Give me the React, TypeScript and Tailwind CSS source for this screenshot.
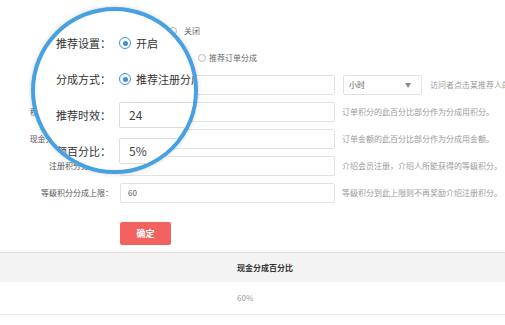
import React from "react";

const font = "font-['Noto_Sans_CJK_SC','Noto_Sans',sans-serif]";

function URow({ label, children }: { label: string; children?: React.ReactNode }) {
  return (
    <div className="flex h-[27px] items-center">
      <div className="w-[113px] shrink-0 whitespace-nowrap text-right text-[8px] leading-none text-[#555]">{label}</div>
      <div className="ml-[7px] flex items-center whitespace-nowrap">{children}</div>
    </div>
  );
}

function UInput({ value }: { value?: string }) {
  return (
    <div className="flex h-[20px] w-[215px] shrink-0 items-center rounded-[2px] border border-[#e2e2e2] bg-white pl-[7px] text-[8px] text-[#555]">
      {value}
    </div>
  );
}

function UHint({ text, ml = "ml-[7px]" }: { text: string; ml?: string }) {
  return <span className={`${ml} whitespace-nowrap text-[8px] leading-none text-[#9a9a9a]`}>{text}</span>;
}

function URadio({ on }: { on?: boolean }) {
  return (
    <span className={`flex h-[8px] w-[8px] items-center justify-center rounded-full border ${on ? "border-[#3d8fdc]" : "border-[#bbb]"}`}>
      {on && <span className="h-[3px] w-[3px] rounded-full bg-[#3d8fdc]" />}
    </span>
  );
}

function MRadio({ on }: { on?: boolean }) {
  return (
    <span className={`flex h-[12px] w-[12px] shrink-0 items-center justify-center rounded-full border-[1.5px] ${on ? "border-[#3d8fdc]" : "border-[#c4c4c4]"}`}>
      {on && <span className="h-[5px] w-[5px] rounded-full bg-[#3d8fdc]" />}
    </span>
  );
}

function MRow({ label, children }: { label: string; children?: React.ReactNode }) {
  return (
    <div className="flex h-[36px] items-center">
      <div className="w-[111px] shrink-0 whitespace-nowrap text-right text-[11px] leading-none text-[#333]">{label}</div>
      <div className="ml-[8px] flex items-center whitespace-nowrap">{children}</div>
    </div>
  );
}

function MInput({ value }: { value: string }) {
  return (
    <div className="flex h-[26px] w-[220px] items-center rounded-[2px] border border-[#dcdcdc] bg-white pl-[9px] text-[12px] text-[#444]">
      {value}
    </div>
  );
}

export default function App() {
  return (
    <div className={`relative h-[325px] w-[505px] overflow-hidden bg-white ${font}`}>
      {/* underlying page */}
      <div className="pt-[17px]">
        <URow label="推荐设置：">
          <URadio on />
          <span className="ml-[3px] text-[8px] text-[#666]">开启</span>
          <span className="ml-[22px]" />
          <URadio />
          <span className="ml-[7px] text-[8px] text-[#666]">关闭</span>
        </URow>
        <URow label="分成方式：">
          <URadio on />
          <span className="ml-[3px] text-[8px] text-[#666]">推荐注册分成</span>
          <span className="ml-[19px]" />
          <URadio />
          <span className="ml-[3px] text-[8px] text-[#666]">推荐订单分成</span>
        </URow>
        <URow label="推荐时效：">
          <UInput value="24" />
          <div className="ml-[8px] flex h-[20px] w-[79px] items-center justify-between rounded-[2px] border border-[#e2e2e2] pl-[5px] pr-[10px] text-[8px] text-[#666]">
            <span>小时</span>
            <span className="text-[6px] text-[#888]">▼</span>
          </div>
          <UHint ml="ml-[8px]" text="访问者点击某推荐人的链接后，在此时间内注册、下单均视为该推荐人的推荐" />
        </URow>
        <URow label="积分分成百分比（%）：">
          <UInput value="5" />
          <UHint text="订单积分的此百分比部分作为分成用积分。" />
        </URow>
        <URow label="现金分成百分比（%）：">
          <UInput value="5" />
          <UHint text="订单金额的此百分比部分作为分成用金额。" />
        </URow>
        <URow label="注册积分分成数：">
          <UInput value="10" />
          <UHint text="介绍会员注册，介绍人所能获得的等级积分。" />
        </URow>
        <URow label="等级积分分成上限：">
          <UInput value="60" />
          <UHint text="等级积分到此上限则不再奖励介绍注册积分。" />
        </URow>
        <div className="ml-[120px] mt-[16px] flex h-[23px] w-[51px] items-center justify-center rounded-[2px] bg-[#f1625e] text-[9px] font-bold text-white">
          确定
        </div>
        <div className="mt-[7px] border-t border-[#e0e0e0] shadow-[0_-1px_2px_rgba(0,0,0,0.05)]">
          <div className="flex h-[29px] items-center bg-[#f3f3f3] pl-[237px] text-[8px] font-bold text-[#333]">现金分成百分比</div>
          <div className="flex h-[33px] items-center border-b border-[#ececec] pl-[237px] text-[8px] text-[#999]">60%</div>
          <div className="flex h-[33px] items-center pl-[237px] text-[8px] text-[#999]">40%</div>
        </div>
      </div>

      {/* magnifier */}
      <div className="absolute left-[31px] top-[7px] h-[167px] w-[167px] overflow-hidden rounded-full border-4 border-[#46a1e2] bg-white shadow-[0_0_4px_rgba(0,0,0,0.18)]">
        <div className="absolute left-[-35px] top-[-11px] w-[505px] pt-[25px]">
          <MRow label="推荐设置：">
            <MRadio on />
            <span className="ml-[5px] text-[11px] leading-none text-[#333]">开启</span>
            <span className="ml-[22px]" />
            <MRadio />
            <span className="ml-[5px] text-[11px] leading-none text-[#333]">关闭</span>
          </MRow>
          <MRow label="分成方式：">
            <MRadio on />
            <span className="ml-[5px] text-[11px] leading-none text-[#333]">推荐注册分成</span>
          </MRow>
          <MRow label="推荐时效：">
            <MInput value="24" />
          </MRow>
          <MRow label="金额百分比：">
            <MInput value="5%" />
          </MRow>
        </div>
      </div>
    </div>
  );
}
